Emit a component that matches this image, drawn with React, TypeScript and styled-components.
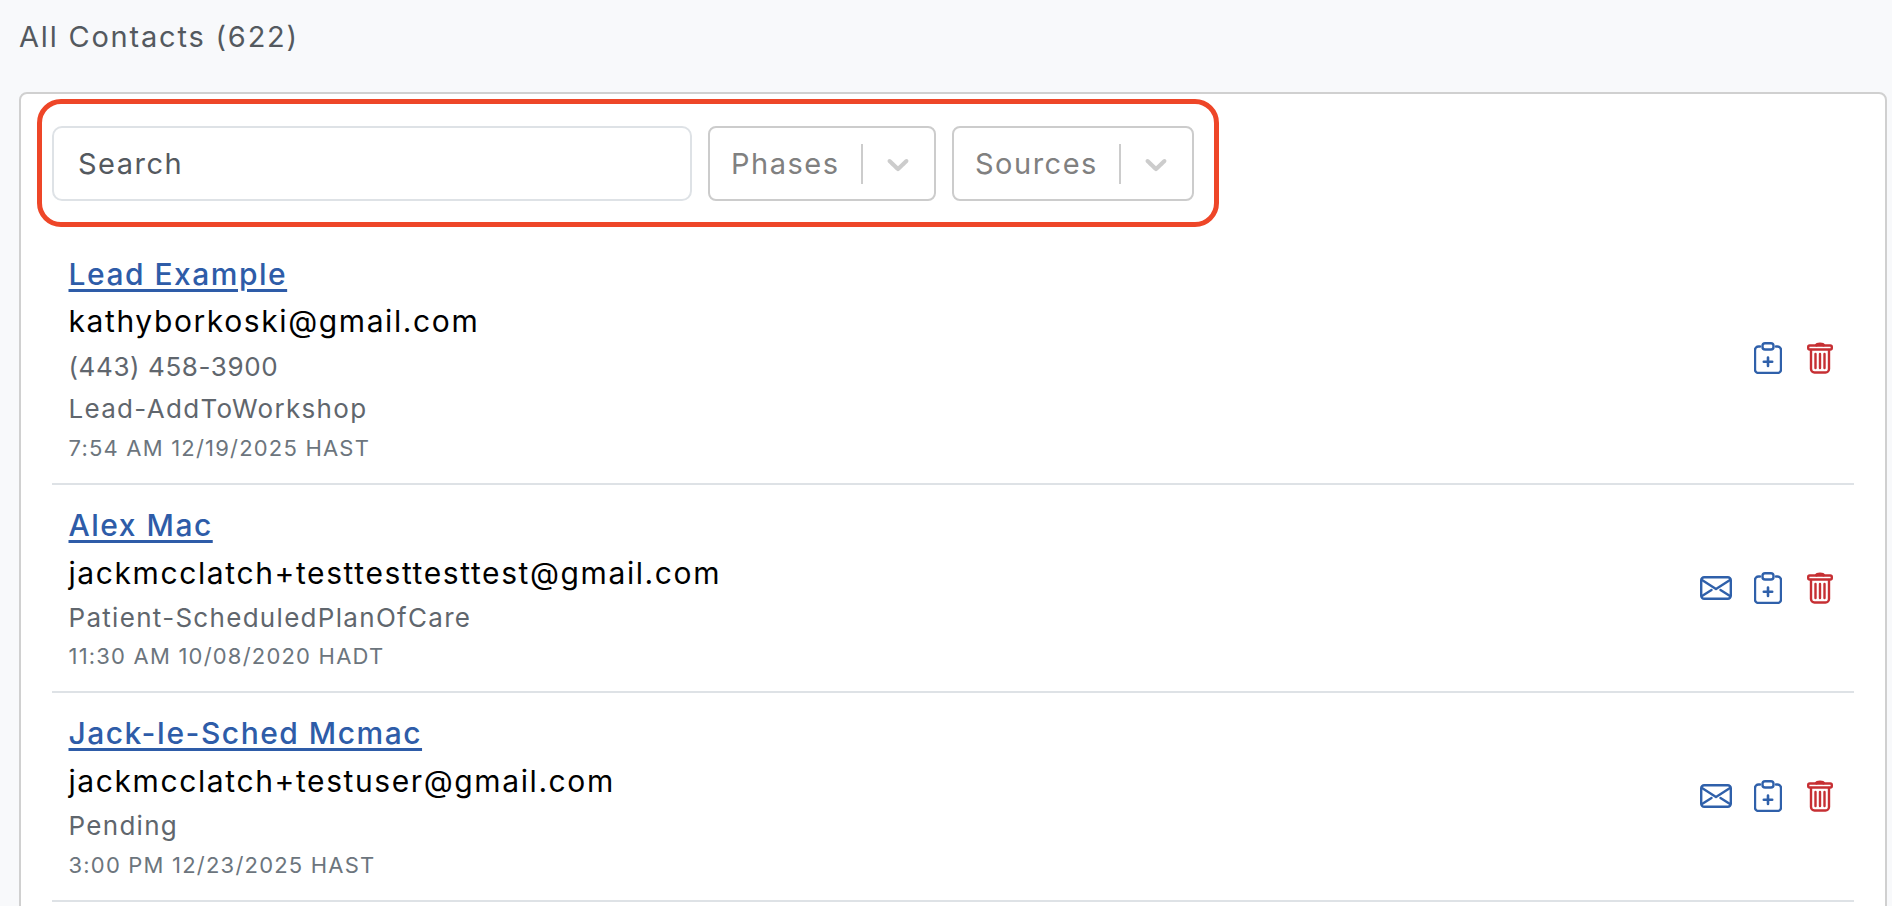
import React from 'react'
import styled, { createGlobalStyle } from 'styled-components'

const GlobalStyle = createGlobalStyle`
  html, body {
    margin: 0;
    height: 906px;
    overflow: hidden;
    background: #f8f9fb;
    font-family: Inter, "Liberation Sans", sans-serif;
  }
`

const Page = styled.div`
  height: 906px;
  overflow: hidden;
  padding: 18px 5px 0 19px;
  box-sizing: border-box;
`

const Title = styled.h1`
  margin: 0 0 36px;
  font-size: 29px;
  line-height: 38px;
  font-weight: 400;
  letter-spacing: 1.8px;
  color: #54595f;
`

const Card = styled.div`
  background: #fff;
  border: 2px solid #d0d0d0;
  border-radius: 8px;
  padding: 5px 31px 0 16px;
  min-height: 900px;
`

const FilterBox = styled.div`
  display: inline-flex;
  align-items: center;
  gap: 16px;
  padding: 22px 19.5px 20.5px 10px;
  border: 5px solid #ee4628;
  border-radius: 24px;
  margin-bottom: 7px;
  vertical-align: top;
`

const SearchField = styled.div`
  width: 640px;
  height: 75px;
  box-sizing: border-box;
  display: flex;
  align-items: center;
  padding-left: 24px;
  border: 2px solid #dee2e6;
  border-radius: 10px;
  font-size: 29px;
  letter-spacing: 1.5px;
  color: #54595f;
`

const Select = styled.div<{ $width: number }>`
  width: ${(p) => p.$width}px;
  height: 75px;
  box-sizing: border-box;
  display: flex;
  align-items: center;
  padding-left: 21px;
  border: 2px solid #cccccc;
  border-radius: 8px;
  font-size: 29px;
  letter-spacing: 1.5px;
  color: #808080;
`

const SelectLabel = styled.span`
  flex: 1;
`

const SelectDivider = styled.span`
  width: 2px;
  height: 40px;
  background: #cccccc;
`

const Chevron = styled.svg`
  width: 36px;
  height: 36px;
  margin: 0 18px 0 17px;
  fill: #cccccc;
  flex: none;
`

const List = styled.div`
  display: flex;
  flex-direction: column;
  margin-left: 15px;
`

const Row = styled.div`
  display: flex;
  align-items: center;
  justify-content: space-between;
  padding: 16px 21px 17px 16.5px;
  border-bottom: 2px solid #dee2e6;
`

const Info = styled.div`
  display: flex;
  flex-direction: column;
  align-items: flex-start;
`

const Name = styled.a`
  font-size: 30px;
  line-height: 48.8px;
  font-weight: 500;
  letter-spacing: 1.5px;
  color: #2e5ca8;
  text-decoration: underline;
  text-decoration-thickness: 2.5px;
  text-underline-offset: 4px;
`

const Email = styled.div`
  font-size: 30px;
  line-height: 47.2px;
  letter-spacing: 1.6px;
  color: #000;
`

const Meta = styled.div`
  font-size: 26px;
  line-height: 42.5px;
  letter-spacing: 1.3px;
  color: #60666d;
`

const Phone = styled(Meta)`
  letter-spacing: 0.6px;
`

const Stamp = styled.div`
  font-size: 22px;
  line-height: 35.2px;
  letter-spacing: 1.2px;
  color: #6c757d;
`

const Actions = styled.div`
  display: flex;
  align-items: center;
  gap: 25px;
`

const Icon = styled.svg<{ $color: string }>`
  display: block;
  fill: none;
  stroke: ${(p) => p.$color};
  stroke-width: 2.4;
  stroke-linecap: round;
  stroke-linejoin: round;
`

const Mail = styled(Icon)`
  margin-right: -3px;
`

const BLUE = '#2f60aa'
const RED = '#c62f33'

const MailIcon = () => (
  <Mail $color={BLUE} width="32" height="24" viewBox="0 0 32 24">
    <rect x="1.2" y="1.2" width="29.6" height="21.6" rx="3" />
    <path d="M2 4 16 13 30 4M2 20l9.500-6M30 20l-9.500-6" />
  </Mail>
)

const ClipboardIcon = () => (
  <Icon $color={BLUE} width="28" height="32" viewBox="0 0 28 32">
    <path d="M6 4.500H4.500a3.500 3.500 0 0 0-3.500 3.500V27.500a3.500 3.500 0 0 0 3.500 3.500h19a3.500 3.500 0 0 0 3.500-3.500V8a3.500 3.500 0 0 0-3.500-3.500H22" />
    <rect x="8.500" y="1.200" width="11" height="6.300" rx="2.600" />
    <path d="M14 15.500v8.500M9.800 19.800h8.400" strokeWidth="2.600" />
  </Icon>
)

const TrashIcon = () => (
  <Icon $color={RED} width="26" height="32" viewBox="0 0 26 32">
    <rect x="1.200" y="3.500" width="23.600" height="4" rx="1.500" />
    <path d="M9.500 3c.5-1.500 6.500-1.500 7 0" strokeWidth="3" />
    <path d="M4 8v19a3.500 3.500 0 0 0 3.500 3.500h11A3.500 3.500 0 0 0 22 27V8" />
    <path d="M8.500 12v14M13 12v14M17.500 12v14" />
  </Icon>
)

interface Contact {
  name: string
  email: string
  phone?: string
  phase: string
  stamp: string
  canMail: boolean
}

const contacts: Contact[] = [
  {
    name: 'Lead Example',
    email: 'kathyborkoski@gmail.com',
    phone: '(443) 458-3900',
    phase: 'Lead-AddToWorkshop',
    stamp: '7:54 AM 12/19/2025 HAST',
    canMail: false,
  },
  {
    name: 'Alex Mac',
    email: 'jackmcclatch+testtesttesttest@gmail.com',
    phase: 'Patient-ScheduledPlanOfCare',
    stamp: '11:30 AM 10/08/2020 HADT',
    canMail: true,
  },
  {
    name: 'Jack-Ie-Sched Mcmac',
    email: 'jackmcclatch+testuser@gmail.com',
    phase: 'Pending',
    stamp: '3:00 PM 12/23/2025 HAST',
    canMail: true,
  },
]

const ArrowDown = () => (
  <Chevron viewBox="0 0 20 20">
    <path d="M4.516 7.548c0.436-0.446 1.043-0.481 1.576 0l3.908 3.747 3.908-3.747c0.533-0.481 1.141-0.446 1.574 0 0.436 0.445 0.408 1.197 0 1.615-0.406 0.418-4.695 4.502-4.695 4.502-0.217 0.223-0.502 0.335-0.787 0.335s-0.57-0.112-0.789-0.335c0 0-4.287-4.084-4.695-4.502s-0.436-1.17 0-1.615z" />
  </Chevron>
)

export default function App() {
  return (
    <Page>
      <GlobalStyle />
      <Title>All Contacts (622)</Title>
      <Card>
        <FilterBox>
          <SearchField>Search</SearchField>
          <Select $width={228}>
            <SelectLabel>Phases</SelectLabel>
            <SelectDivider />
            <ArrowDown />
          </Select>
          <Select $width={242}>
            <SelectLabel>Sources</SelectLabel>
            <SelectDivider />
            <ArrowDown />
          </Select>
        </FilterBox>
        <List>
          {contacts.map((c) => (
            <Row key={c.email}>
              <Info>
                <Name href="#">{c.name}</Name>
                <Email>{c.email}</Email>
                {c.phone && <Phone>{c.phone}</Phone>}
                <Meta>{c.phase}</Meta>
                <Stamp>{c.stamp}</Stamp>
              </Info>
              <Actions>
                {c.canMail && <MailIcon />}
                <ClipboardIcon />
                <TrashIcon />
              </Actions>
            </Row>
          ))}
        </List>
      </Card>
    </Page>
  )
}
